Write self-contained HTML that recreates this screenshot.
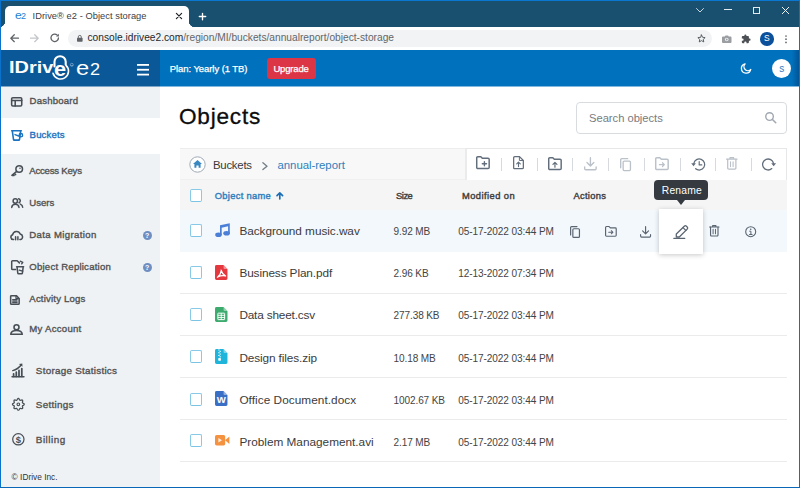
<!DOCTYPE html>
<html lang="en">
<head>
<meta charset="utf-8">
<title>IDrive e2 - Object storage</title>
<style>
*{box-sizing:border-box;margin:0;padding:0}
html,body{width:800px;height:488px;overflow:hidden;background:#fff}
body{font-family:"Liberation Sans",Arial,sans-serif;color:#333;position:relative}
div,span,svg{position:absolute}
svg{overflow:visible}
#frame{left:0;top:0;width:800px;height:488px;border:1px solid #0a72ca;border-top-color:#0a78d2;border-bottom-color:#0a67b8;z-index:50}
#titlebar{left:0;top:0;width:800px;height:27px;background:#19506f}
#tab{left:5px;top:6px;width:184px;height:22px;background:#fff;border-radius:5px 5px 0 0}
#tab .c1{left:-6px;bottom:1px;width:6px;height:6px;background:radial-gradient(circle at 0 0,transparent 6px,#fff 6.5px)}
#tab .c2{right:-6px;bottom:1px;width:6px;height:6px;background:radial-gradient(circle at 100% 0,transparent 6px,#fff 6.5px)}
#tabt{left:33px;top:10px;font-size:9.4px;color:#3c4043;white-space:nowrap}
#fav{left:15px;top:9px;font-size:10px;color:#1b7fd4;letter-spacing:-.5px;white-space:nowrap}
#toolbar{left:0;top:27px;width:800px;height:23px;background:#fff}
#omni{left:68px;top:30px;width:644px;height:17px;border-radius:9px;background:#f1f3f4}
#url{left:87.5px;top:32.5px;font-size:10.2px;color:#5f6368;white-space:nowrap}
#url i{font-style:normal;color:#202124}
#prof{left:760px;top:32px;width:13.5px;height:13.5px;border-radius:50%;background:#0c4f9b;color:#fff;font-size:8.5px;text-align:center;line-height:13.5px}
#hdrL{left:0;top:50px;width:160px;height:37px;background:linear-gradient(#0a5897 0,#0a5897 36px,#7ca5c6 36px)}
#hdrR{left:160px;top:50px;width:640px;height:37px;background:linear-gradient(#0071bc 0,#0071bc 36px,#80b8de 36px)}
#logo1{left:9.5px;top:58px;font-size:19px;font-weight:bold;color:#fff;letter-spacing:-.9px;white-space:nowrap}
#logo2{left:76px;top:57px;font-size:20.5px;color:#fff;letter-spacing:-.5px;white-space:nowrap}
#reg{left:68.5px;top:60px;font-size:5px;color:#cfe2f2}
#plan{left:170.5px;top:63px;font-size:9.25px;color:#fff;white-space:nowrap}
#upg{left:267px;top:58px;width:48.5px;height:21px;border-radius:3px;background:#dc3545;color:#fff;font-size:9.2px;text-align:center;line-height:20.5px}
#ava{left:772.2px;top:59px;width:19px;height:19px;border-radius:50%;background:#fff;color:#2f7cc2;font-size:10px;text-align:center;line-height:20px}
#side{left:0;top:87px;width:160px;height:402px;background:#eef2f5}
#sel{left:0;top:118px;width:160px;height:36px;background:#fff}
.nav{left:29.6px;font-size:9.3px;font-weight:bold;color:#565656;white-space:nowrap;line-height:12px}
.nav.b{color:#1a73c0}
.nav.w{left:35.8px}
.q{left:142.7px;width:9px;height:9px;border-radius:50%;background:#6e8ec2;color:#fff;font-size:7px;font-weight:bold;text-align:center;line-height:9.5px}
#copy{left:11px;top:472px;font-size:8.2px;color:#333;white-space:nowrap}
#h1{left:178.5px;top:102px;font-size:23.6px;color:#111;white-space:nowrap;line-height:28px}
#search{left:576px;top:101.5px;width:211px;height:32px;border:1px solid #d8dcdf;border-radius:4px;background:#fff}
#search span{left:12.5px;top:8.5px;font-size:11.25px;color:#6f757b;white-space:nowrap}
#tbar{left:180px;top:148px;width:607px;height:32px;background:#f8f8f8;border-top:1px solid #ededed;border-bottom:1px solid #f0f0f0}
#tools{left:465px;top:148px;width:322px;height:32px;background:#fff;border:1px solid #e6e7e9;border-left:2px solid #ebebeb;border-bottom:none}
.sep{top:158px;width:1px;height:12.5px;background:#d6dadf}
.bc{top:157.5px;font-size:11.2px;white-space:nowrap;color:#3f3f3f}
#thead{left:180px;top:180px;width:607px;height:30px;background:#f5f5f5}
.th{top:189px;font-size:9.3px;font-weight:bold;color:#444;white-space:nowrap;line-height:12px}
.row{left:180px;width:607px;border-bottom:1px solid #e9ebed}
.cb{left:190px;width:12px;height:13px;border:1px solid #88c9e7;border-bottom-color:#7cc3e4;border-radius:2px;background:#fff}
.fn{left:240px;font-size:11.63px;color:#3d3d3d;white-space:nowrap;line-height:14px}
.sz{left:393px;font-size:10.14px;color:#444;white-space:nowrap;line-height:12px}
.dt{left:458px;font-size:10.14px;color:#444;white-space:nowrap;line-height:12px}
#tip{left:654px;top:180px;width:53.5px;height:20px;border-radius:4px;background:#343a40;color:#fff;font-size:10px;text-align:center;line-height:19px}
#tipa{left:676.8px;top:199.8px;width:0;height:0;border-left:4.5px solid transparent;border-right:4.5px solid transparent;border-top:5px solid #343a40}
#hov{left:659px;top:209px;width:44px;height:45px;background:#fff;box-shadow:0 1px 5px rgba(0,0,0,.22)}
</style>
</head>
<body>
<div id="titlebar"></div><div id="tab"><div class="c1"></div><div class="c2"></div></div>
<span style="left:15.00px;top:10.00px;font-size:11.2px;line-height:1;color:#1b7fd4;font-weight:normal;letter-spacing:0.000px;white-space:pre;transform:scaleX(1.08);transform-origin:0 0;">e</span>
<span style="left:21.40px;top:12.00px;font-size:8.3px;line-height:1;color:#1b7fd4;font-weight:normal;letter-spacing:0.000px;white-space:pre;transform:scaleX(1.08);transform-origin:0 0;">2</span>
<span style="left:32.50px;top:12.00px;font-size:9.3px;line-height:1;color:#3c4043;font-weight:normal;letter-spacing:0.047px;white-space:pre;">IDrive® e2 - Object storage</span>
<svg style="left:175.9px;top:13.4px" width="6" height="6" viewBox="0 0 6 6" ><path d="M.4.4l5.200 5.200M5.600.4L.4 5.600" fill="none" stroke="#202124" stroke-width="1.2" stroke-linecap="round" stroke-linejoin="round"/></svg>
<svg style="left:198.9px;top:12.8px" width="7" height="7" viewBox="0 0 7 7" ><path d="M3.500 .3v6.400M.3 3.500h6.400" fill="none" stroke="#ffffff" stroke-width="1.35" stroke-linecap="round" stroke-linejoin="round"/></svg>
<svg style="left:696px;top:8px" width="8" height="5" viewBox="0 0 8 5" ><path d="M.5.5L4 4 7.5.5" fill="none" stroke="#c9d6de" stroke-width="1" stroke-linecap="round" stroke-linejoin="round"/></svg>
<svg style="left:724px;top:9.3px" width="8" height="1" viewBox="0 0 8 1" ><rect width="8" height="1" fill="#e3eaee"/></svg>
<svg style="left:753px;top:6.5px" width="7" height="7" viewBox="0 0 7 7" ><rect x=".5" y=".5" width="6" height="6" fill="none" stroke="#e3eaee" stroke-width="1"/></svg>
<svg style="left:782px;top:6.5px" width="7" height="7" viewBox="0 0 7 7" ><path d="M.3.3l6.4 6.4M6.7.3L.3 6.7" fill="none" stroke="#f2f5f7" stroke-width="1" stroke-linecap="round" stroke-linejoin="round"/></svg>
<div id="toolbar"></div><div id="omni"></div>
<svg style="left:10px;top:34px" width="9" height="8.4" viewBox="0 0 9 8.4" ><path d="M8.5 4.2H1M4.3.7L.8 4.2l3.5 3.5" fill="none" stroke="#5f6368" stroke-width="1.25" stroke-linecap="round" stroke-linejoin="round"/></svg>
<svg style="left:30px;top:34px" width="9" height="8.4" viewBox="0 0 9 8.4" ><path d="M.5 4.2H8M4.7.7l3.5 3.5-3.5 3.5" fill="none" stroke="#c4c7ca" stroke-width="1.25" stroke-linecap="round" stroke-linejoin="round"/></svg>
<svg style="left:49.8px;top:33.4px" width="9.6" height="9.6" viewBox="0 0 9 9" ><path d="M7.9 4.6A3.5 3.5 0 1 1 6.8 2" fill="none" stroke="#5f6368" stroke-width="1.25" stroke-linecap="round" stroke-linejoin="round"/><path d="M8.3.6v2.7H5.6z" fill="#5f6368"/></svg>
<svg style="left:76.5px;top:35px" width="5.6" height="6.8" viewBox="0 0 5.6 6.8" ><rect x="0" y="2.8" width="5.6" height="4" rx=".7" fill="#5f6368"/><path d="M1.3 3V1.9a1.5 1.5 0 0 1 3 0V3" fill="none" stroke="#5f6368" stroke-width=".9"/></svg>
<span style="left:87.50px;top:33.00px;font-size:10.2px;line-height:1;color:#62666b;font-weight:normal;letter-spacing:0.002px;white-space:pre;"><i style="font-style:normal;color:#25282b">console.idrivee2.com</i>/region/MI/buckets/annualreport/object-storage</span>
<svg style="left:696.5px;top:34px" width="9" height="9" viewBox="0 0 24 24" ><path d="M12 2.5l2.9 6.3 6.8.8-5 4.7 1.3 6.8L12 17.7l-6 3.4 1.3-6.8-5-4.7 6.8-.8z" fill="none" stroke="#4d5156" stroke-width="2.4" stroke-linecap="round" stroke-linejoin="round"/></svg>
<svg style="left:721.5px;top:34.5px" width="9.5" height="8" viewBox="0 0 19 16" ><path d="M2 3h3.5L7 1h5l1.5 2H17a2 2 0 0 1 2 2v9a2 2 0 0 1-2 2H2a2 2 0 0 1-2-2V5a2 2 0 0 1 2-2z" fill="#9a9da1"/><circle cx="9.5" cy="9" r="3.6" fill="#f4f4f4"/><circle cx="9.5" cy="9" r="1.8" fill="#9a9da1"/></svg>
<svg style="left:741px;top:34px" width="10" height="10" viewBox="0 0 24 24" ><path d="M20.5 11H19V7a2 2 0 0 0-2-2h-4V3.5a2.5 2.5 0 0 0-5 0V5H4a2 2 0 0 0-2 2v3.8h1.5a2.7 2.7 0 0 1 0 5.4H2V20a2 2 0 0 0 2 2h3.8v-1.5a2.7 2.7 0 0 1 5.4 0V22H17a2 2 0 0 0 2-2v-4h1.5a2.5 2.5 0 0 0 0-5z" fill="#4d5156"/></svg>
<div id="prof">S</div>
<svg style="left:785.3px;top:34.6px" width="2" height="8.4" viewBox="0 0 2 8.4" ><circle cx="1" cy="1" r=".85" fill="#5f6368"/><circle cx="1" cy="4.2" r=".85" fill="#5f6368"/><circle cx="1" cy="7.4" r=".85" fill="#5f6368"/></svg>
<div id="hdrL"></div><div id="hdrR"></div>
<span style="left:9.20px;top:60.00px;font-size:15.8px;line-height:1;color:#fff;font-weight:bold;letter-spacing:0.000px;white-space:pre;transform:scaleX(1.26);transform-origin:0 0;">IDriv</span>
<svg style="left:50px;top:54px" width="20" height="26" viewBox="0 0 20 26" ><path d="M4.500 12.5V7.800a5.600 5.600 0 0 1 11.200 0V10.400" fill="none" stroke="#fff" stroke-width="2.1" stroke-linecap="round" stroke-linejoin="round"/><path d="M16 11.300A7.900 7.900 0 1 1 3 19.200" fill="none" stroke="#fff" stroke-width="1.6" stroke-linecap="round" stroke-linejoin="round"/></svg>
<span style="left:53.60px;top:59.00px;font-size:20.5px;line-height:1;color:#fff;font-weight:bold;letter-spacing:0.000px;white-space:pre;transform:scaleX(1.06);transform-origin:0 0;">e</span>
<svg style="left:69.6px;top:62.9px" width="3.6" height="3.6" viewBox="0 0 3.6 3.6" ><circle cx="1.8" cy="1.8" r="1.5" fill="none" stroke="#b9d2e8" stroke-width=".5"/><text x="1.8" y="2.7" font-size="2.4" text-anchor="middle" fill="#b9d2e8" font-family="Liberation Sans,sans-serif">R</text></svg>
<span style="left:76.30px;top:57.00px;font-size:21px;line-height:1;color:#fff;font-weight:normal;letter-spacing:0.000px;white-space:pre;transform:scaleX(1.13);transform-origin:0 0;">e</span>
<span style="left:89.60px;top:62.00px;font-size:15.6px;line-height:1;color:#fff;font-weight:normal;letter-spacing:0.000px;white-space:pre;transform:scaleX(1.16);transform-origin:0 0;">2</span>
<svg style="left:137px;top:64px" width="12" height="11.5" viewBox="0 0 12 11.5" ><rect y="0" width="12" height="1.8" fill="#fff"/><rect y="4.85" width="12" height="1.8" fill="#fff"/><rect y="9.7" width="12" height="1.8" fill="#fff"/></svg>
<span style="left:169.80px;top:64.00px;font-size:9.5px;line-height:1;color:#fff;font-weight:normal;letter-spacing:-0.075px;white-space:pre;-webkit-text-stroke:.25px #fff;">Plan: Yearly (1 TB)</span>
<div id="upg"></div>
<span style="left:273.40px;top:64.00px;font-size:9.5px;line-height:1;color:#fff;font-weight:normal;letter-spacing:-0.176px;white-space:pre;-webkit-text-stroke:.25px #fff;">Upgrade</span>
<svg style="left:739.8px;top:62.2px" width="12.6" height="12.6" viewBox="0 0 24 24" ><path d="M20.5 14.2A9 9 0 1 1 9.8 3.5a7 7 0 0 0 10.7 10.7z" fill="none" stroke="#fff" stroke-width="2.5" stroke-linecap="round" stroke-linejoin="round"/></svg>
<div style="left:792px;top:50px;width:7px;height:36px;background:linear-gradient(90deg,rgba(0,60,120,0),rgba(0,60,120,.55))"></div>
<div id="ava">s</div>
<div id="side"></div><div id="sel"></div>
<span style="left:29.60px;top:96.00px;font-size:9.6px;line-height:1;color:#535353;font-weight:normal;letter-spacing:0.183px;white-space:pre;-webkit-text-stroke:.36px #535353;">Dashboard</span>
<span style="left:29.60px;top:130.00px;font-size:9.6px;line-height:1;color:#1a73c0;font-weight:normal;letter-spacing:0.143px;white-space:pre;-webkit-text-stroke:.36px #1a73c0;">Buckets</span>
<span style="left:29.30px;top:166.00px;font-size:9.6px;line-height:1;color:#535353;font-weight:normal;letter-spacing:-0.222px;white-space:pre;-webkit-text-stroke:.36px #535353;">Access Keys</span>
<span style="left:29.30px;top:198.00px;font-size:9.6px;line-height:1;color:#535353;font-weight:normal;letter-spacing:-0.016px;white-space:pre;-webkit-text-stroke:.36px #535353;">Users</span>
<span style="left:29.30px;top:230.00px;font-size:9.6px;line-height:1;color:#535353;font-weight:normal;letter-spacing:0.355px;white-space:pre;-webkit-text-stroke:.36px #535353;">Data Migration</span>
<span style="left:29.30px;top:262.00px;font-size:9.6px;line-height:1;color:#535353;font-weight:normal;letter-spacing:0.214px;white-space:pre;-webkit-text-stroke:.36px #535353;">Object Replication</span>
<span style="left:29.30px;top:294.00px;font-size:9.6px;line-height:1;color:#535353;font-weight:normal;letter-spacing:0.187px;white-space:pre;-webkit-text-stroke:.36px #535353;">Activity Logs</span>
<span style="left:29.30px;top:324.00px;font-size:9.6px;line-height:1;color:#535353;font-weight:normal;letter-spacing:0.267px;white-space:pre;-webkit-text-stroke:.36px #535353;">My Account</span>
<span style="left:35.80px;top:366.00px;font-size:9.9px;line-height:1;color:#535353;font-weight:normal;letter-spacing:0.256px;white-space:pre;-webkit-text-stroke:.36px #535353;">Storage Statistics</span>
<span style="left:35.80px;top:400.00px;font-size:9.9px;line-height:1;color:#535353;font-weight:normal;letter-spacing:0.288px;white-space:pre;-webkit-text-stroke:.36px #535353;">Settings</span>
<span style="left:35.80px;top:435.00px;font-size:9.9px;line-height:1;color:#535353;font-weight:normal;letter-spacing:0.523px;white-space:pre;-webkit-text-stroke:.36px #535353;">Billing</span>
<div class="q" style="top:231.4px">?</div><div class="q" style="top:263.4px">?</div>
<span style="left:11.60px;top:473.00px;font-size:8.3px;line-height:1;color:#333;font-weight:normal;letter-spacing:0.020px;white-space:pre;">© IDrive Inc.</span>
<svg style="left:10.8px;top:96.6px" width="11.4" height="9.6" viewBox="0 0 11.4 9.6" ><rect x=".65" y=".65" width="10.1" height="8.3" rx="1.2" fill="none" stroke="#474e55" stroke-width="1.55" stroke-linecap="round" stroke-linejoin="round"/><path d="M.65 3.5h10.1M4.2 3.5v5.4" fill="none" stroke="#474e55" stroke-width="1.55" stroke-linecap="round" stroke-linejoin="round"/></svg>
<svg style="left:10.8px;top:130.4px" width="12.4" height="10.8" viewBox="0 0 12.4 10.8" ><path d="M.7.75h9.6M1.3.9l1.2 8.6a.8.8 0 0 0 .8.65h4.4a.8.8 0 0 0 .8-.65L9.7.9" fill="none" stroke="#1a73c0" stroke-width="1.6" stroke-linecap="round" stroke-linejoin="round"/><circle cx="9.9" cy="5.2" r="1.7" fill="none" stroke="#1a73c0" stroke-width="1.45" stroke-linecap="round" stroke-linejoin="round"/><path d="M4 4.6l4.4 1.6" fill="none" stroke="#1a73c0" stroke-width="1.45" stroke-linecap="round" stroke-linejoin="round"/></svg>
<svg style="left:10.8px;top:165.2px" width="12.2" height="11.2" viewBox="0 0 12.2 11.2" ><circle cx="8.2" cy="4" r="3.3" fill="none" stroke="#474e55" stroke-width="1.55" stroke-linecap="round" stroke-linejoin="round"/><circle cx="9" cy="3.3" r=".75" fill="#474e55"/><path d="M5.7 6.3L.9 10.3M1.2 10.4h1.9M3.4 8.3l1.2 1.3" fill="none" stroke="#474e55" stroke-width="1.55" stroke-linecap="round" stroke-linejoin="round"/></svg>
<svg style="left:10.5px;top:197.8px" width="12.4" height="10" viewBox="0 0 12.4 10" ><circle cx="4.3" cy="3" r="2.2" fill="none" stroke="#474e55" stroke-width="1.5" stroke-linecap="round" stroke-linejoin="round"/><path d="M.7 9.4a3.7 3.7 0 0 1 7.3 0" fill="none" stroke="#474e55" stroke-width="1.5" stroke-linecap="round" stroke-linejoin="round"/><path d="M7.6.8a2.1 2.1 0 0 1 .4 4M9.3 6.1a3.6 3.6 0 0 1 2.4 3.2" fill="none" stroke="#474e55" stroke-width="1.5" stroke-linecap="round" stroke-linejoin="round"/></svg>
<svg style="left:10.3px;top:231px" width="13.4" height="9.4" viewBox="0 0 13.4 9.4" ><path d="M3.6 8.6H3.2A2.5 2.5 0 0 1 2.7 3.7 3.9 3.9 0 0 1 10.2 3a2.9 2.9 0 0 1 .4 5.6H9.9" fill="none" stroke="#474e55" stroke-width="1.5" stroke-linecap="round" stroke-linejoin="round"/><path d="M5.6 5.8v3M7.9 5.8v3" fill="none" stroke="#474e55" stroke-width="1.5" stroke-linecap="round" stroke-linejoin="round"/></svg>
<svg style="left:10.5px;top:260.3px" width="13.6" height="14.5" viewBox="0 0 13.6 14.5" ><path d="M4.6 9.6H1.6a.9.9 0 0 1-.9-.9V1.6a.9.9 0 0 1 .9-.9h4.6l2.2 2.2" fill="none" stroke="#474e55" stroke-width="1.5" stroke-linecap="round" stroke-linejoin="round"/><path d="M9.2 1.2l2.6 1.1-1.1 1.6" fill="none" stroke="#474e55" stroke-width="1.35" stroke-linecap="round" stroke-linejoin="round"/><path d="M5.6 6.7h7M6 6.9l.8 6.2a.8.8 0 0 0 .8.7h3a.8.8 0 0 0 .8-.7l.8-6.2" fill="none" stroke="#474e55" stroke-width="1.5" stroke-linecap="round" stroke-linejoin="round"/><path d="M8.2 10.2l3.4 1" fill="none" stroke="#474e55" stroke-width="1.35" stroke-linecap="round" stroke-linejoin="round"/></svg>
<svg style="left:10.2px;top:294.8px" width="9.8" height="10" viewBox="0 0 9.8 10" ><path d="M1.7.65h4.6l2.85 2.8v5a.9.9 0 0 1-.9.9H1.55a.9.9 0 0 1-.9-.9V1.55a.9.9 0 0 1 .9-.9z" fill="none" stroke="#474e55" stroke-width="1.55" stroke-linecap="round" stroke-linejoin="round"/><path d="M2.6 4.6h4.6M2.6 6.1h4.6M2.6 7.6h4.6" fill="none" stroke="#474e55" stroke-width="1.15" stroke-linecap="round" stroke-linejoin="round"/><path d="M6 .9v2.6h2.7" fill="none" stroke="#474e55" stroke-width="1.25" stroke-linecap="round" stroke-linejoin="round"/></svg>
<svg style="left:10px;top:324px" width="13" height="11" viewBox="0 0 13 11" ><circle cx="6.5" cy="3.2" r="2.5" fill="none" stroke="#474e55" stroke-width="1.55" stroke-linecap="round" stroke-linejoin="round"/><path d="M.7 10.3c.3-2.3 2.3-3.8 5.8-3.8s5.5 1.5 5.8 3.8z" fill="none" stroke="#474e55" stroke-width="1.55" stroke-linecap="round" stroke-linejoin="round"/></svg>
<svg style="left:12.2px;top:363.2px" width="12" height="14.4" viewBox="0 0 12 14.4" ><path d="M0 13.8h12" fill="none" stroke="#474e55" stroke-width="1.35" stroke-linecap="round" stroke-linejoin="round"/><path d="M1.6 13.4v-2.6M4.3 13.4V9.2M7 13.4V7.4M9.8 13.4V5.6" fill="none" stroke="#474e55" stroke-width="1.75" stroke-linecap="round" stroke-linejoin="round"/><path d="M.8 7.6c3.500-.8 6.200-2.700 8.600-5.800" fill="none" stroke="#474e55" stroke-width="1.45" stroke-linecap="round" stroke-linejoin="round"/><path d="M6.900.9l3.400-.4.200 3.300z" fill="#474e55"/></svg>
<svg style="left:12.25px;top:398.2px" width="12.7" height="12.7" viewBox="-6.35 -6.35 12.7 12.7" ><path d="M5.90 0.00L5.70 0.50L5.20 0.92L4.61 1.24L4.18 1.52L4.03 1.88L4.14 2.39L4.33 3.03L4.39 3.68L4.17 4.17L3.68 4.39L3.03 4.33L2.39 4.14L1.88 4.03L1.52 4.18L1.24 4.61L0.92 5.20L0.50 5.70L0.00 5.90L-0.50 5.70L-0.92 5.20L-1.24 4.61L-1.52 4.18L-1.88 4.03L-2.39 4.14L-3.03 4.33L-3.68 4.39L-4.17 4.17L-4.39 3.68L-4.33 3.03L-4.14 2.39L-4.03 1.88L-4.18 1.52L-4.61 1.24L-5.20 0.92L-5.70 0.50L-5.90 0.00L-5.70 -0.50L-5.20 -0.92L-4.61 -1.24L-4.18 -1.52L-4.03 -1.88L-4.14 -2.39L-4.33 -3.03L-4.39 -3.68L-4.17 -4.17L-3.68 -4.39L-3.03 -4.33L-2.39 -4.14L-1.88 -4.03L-1.52 -4.18L-1.24 -4.61L-0.92 -5.20L-0.50 -5.70L-0.00 -5.90L0.50 -5.70L0.92 -5.20L1.24 -4.61L1.52 -4.18L1.88 -4.03L2.39 -4.14L3.03 -4.33L3.68 -4.39L4.17 -4.17L4.39 -3.68L4.33 -3.03L4.14 -2.39L4.03 -1.88L4.18 -1.52L4.61 -1.24L5.20 -0.92L5.70 -0.50z" fill="none" stroke="#474e55" stroke-width="1.25" stroke-linejoin="round"/><circle r="1.35" fill="none" stroke="#474e55" stroke-width="1.1"/></svg>
<svg style="left:12.35px;top:432.8px" width="12.7" height="12.7" viewBox="0 0 12.7 12.7" ><circle cx="6.35" cy="6.35" r="5.65" fill="none" stroke="#474e55" stroke-width="1.25"/><text x="6.35" y="9.6" font-size="9.4" font-weight="bold" text-anchor="middle" fill="#474e55" font-family="Liberation Sans,sans-serif">$</text></svg>
<span style="left:179.00px;top:106.00px;font-size:22.6px;line-height:1;color:#0c0c0c;font-weight:normal;letter-spacing:0.782px;white-space:pre;-webkit-text-stroke:.3px #0c0c0c;">Objects</span>
<div id="search"></div>
<span style="left:589.00px;top:113.00px;font-size:11.2px;line-height:1;color:#767c82;font-weight:normal;letter-spacing:-0.017px;white-space:pre;">Search objects</span>
<svg style="left:764.6px;top:112.2px" width="11.4" height="11.4" viewBox="0 0 10.5 10.5" ><circle cx="4.2" cy="4.2" r="3.5" fill="none" stroke="#a1a8b2" stroke-width="1.3" stroke-linecap="round" stroke-linejoin="round"/><path d="M6.9 6.9l3 3" fill="none" stroke="#a1a8b2" stroke-width="1.4" stroke-linecap="round" stroke-linejoin="round"/></svg>
<div id="tbar"></div><div id="tools"></div>
<svg style="left:189px;top:155.9px" width="17" height="17" viewBox="0 0 17 17" ><circle cx="8.5" cy="8.5" r="7.700" fill="#fff" stroke="#9fabb5" stroke-width="1"/><path d="M8.500 3.900l4.500 4.100h-1.400v3.800H9.600V9.400H7.400v2.400H5.400V8H4z" fill="#3a88c2"/></svg>
<span style="left:213.00px;top:160.00px;font-size:11.4px;line-height:1;color:#3a3a3a;font-weight:normal;letter-spacing:-0.255px;white-space:pre;">Buckets</span>
<svg style="left:262.3px;top:161.5px" width="6" height="8.4" viewBox="0 0 6 8.400" ><path d="M.9.8L5 4.200 .9 7.600" fill="none" stroke="#737e88" stroke-width="1.35" stroke-linecap="round" stroke-linejoin="round"/></svg>
<span style="left:277.50px;top:160.00px;font-size:11.4px;line-height:1;color:#2f7fbd;font-weight:normal;letter-spacing:-0.030px;white-space:pre;">annual-report</span>
<div class="sep" style="left:501px"></div>
<div class="sep" style="left:537px"></div>
<div class="sep" style="left:572.3px"></div>
<div class="sep" style="left:608px"></div>
<div class="sep" style="left:643.5px"></div>
<div class="sep" style="left:680px"></div>
<div class="sep" style="left:715.3px"></div>
<div class="sep" style="left:751px"></div>
<svg style="left:476.2px;top:156.1px" width="13.9" height="13.2" viewBox="0 0 13.2 12.6" ><path d="M1.700 .65h2.900l1.400 1.500h5.500a1.050 1.050 0 0 1 1.050 1.050v7.700a1.050 1.050 0 0 1-1.050 1.050H1.700A1.050 1.050 0 0 1 .65 10.900V1.700A1.050 1.050 0 0 1 1.700 .65z" fill="none" stroke="#626e7b" stroke-width="1.4" stroke-linecap="round" stroke-linejoin="round"/><path d="M8 5.400v4M6 7.400h4" fill="none" stroke="#626e7b" stroke-width="1.35" stroke-linecap="round" stroke-linejoin="round"/></svg>
<svg style="left:512.6px;top:155.6px" width="11" height="13.4" viewBox="0 0 11 13.4" ><path d="M1.700 .65h4.800l3.850 3.800v7.250a1.050 1.050 0 0 1-1.050 1.050H1.700A1.050 1.050 0 0 1 .65 11.700V1.700A1.050 1.050 0 0 1 1.700 .65z" fill="none" stroke="#626e7b" stroke-width="1.25" stroke-linecap="round" stroke-linejoin="round"/><path d="M6.400 .9v3.600h3.700" fill="none" stroke="#626e7b" stroke-width="1" stroke-linecap="round" stroke-linejoin="round"/><path d="M5.500 10.600V6.200M3.700 7.900l1.800-1.800 1.800 1.800" fill="none" stroke="#626e7b" stroke-width="1.15" stroke-linecap="round" stroke-linejoin="round"/></svg>
<svg style="left:548.2px;top:157.1px" width="13.9" height="13.2" viewBox="0 0 13.2 12.6" ><path d="M1.700 .65h2.900l1.400 1.500h5.500a1.050 1.050 0 0 1 1.050 1.050v7.700a1.050 1.050 0 0 1-1.050 1.050H1.700A1.050 1.050 0 0 1 .65 10.900V1.700A1.050 1.050 0 0 1 1.700 .65z" fill="none" stroke="#626e7b" stroke-width="1.4" stroke-linecap="round" stroke-linejoin="round"/><path d="M6.600 9.700V5.300M4.700 7.100l1.900-1.900 1.900 1.900" fill="none" stroke="#626e7b" stroke-width="1.15" stroke-linecap="round" stroke-linejoin="round"/></svg>
<svg style="left:584.4px;top:157px" width="12.84" height="13.482000000000001" viewBox="0 0 12 12.6" ><path d="M6 .6v7.600M2.800 5.200L6 8.400l3.200-3.200" fill="none" stroke="#bac1c9" stroke-width="1.25" stroke-linecap="round" stroke-linejoin="round"/><path d="M.65 9.300v1.600a1.050 1.050 0 0 0 1.050 1.050h8.600a1.050 1.050 0 0 0 1.050-1.050V9.300" fill="none" stroke="#bac1c9" stroke-width="1.25" stroke-linecap="round" stroke-linejoin="round"/></svg>
<svg style="left:620.3px;top:157.8px" width="11.13" height="13.23" viewBox="0 0 10.6 12.6" ><rect x="3" y="2.900" width="6.950" height="9.050" rx="1" fill="none" stroke="#bac1c9" stroke-width="1.25" stroke-linecap="round" stroke-linejoin="round"/><path d="M.65 9.400V1.650a1 1 0 0 1 1-1h5.700" fill="none" stroke="#bac1c9" stroke-width="1.25" stroke-linecap="round" stroke-linejoin="round"/></svg>
<svg style="left:654.5px;top:157.20000000000002px" width="13.9" height="13.2" viewBox="0 0 13.2 12.6" ><path d="M1.700 .65h2.900l1.400 1.500h5.500a1.050 1.050 0 0 1 1.050 1.050v7.700a1.050 1.050 0 0 1-1.050 1.050H1.700A1.050 1.050 0 0 1 .65 10.900V1.700A1.050 1.050 0 0 1 1.700 .65z" fill="none" stroke="#bac1c9" stroke-width="1.4" stroke-linecap="round" stroke-linejoin="round"/><path d="M4.200 7.300h4.600M7.100 5.500l1.800 1.800-1.800 1.800" fill="none" stroke="#bac1c9" stroke-width="1.15" stroke-linecap="round" stroke-linejoin="round"/></svg>
<svg style="left:690.8px;top:157.2px" width="14" height="13" viewBox="0 0 14 13" ><path d="M2.820 6.360A5.500 5.500 0 1 1 4.660 11.700" fill="none" stroke="#626e7b" stroke-width="1.25" stroke-linecap="round" stroke-linejoin="round"/><path d="M.2 6.200h4.700L2.550 9.200z" fill="#626e7b"/><path d="M8.200 4.500V7.900H10.800" fill="none" stroke="#626e7b" stroke-width="1.15" stroke-linecap="round" stroke-linejoin="round"/></svg>
<svg style="left:726.2px;top:157.2px" width="11.6" height="12.8" viewBox="0 0 11.6 12.8" ><path d="M.6 2.200h10.400M4 2V.65h3.600V2" fill="none" stroke="#bac1c9" stroke-width="1.2" stroke-linecap="round" stroke-linejoin="round"/><path d="M1.700 2.400v8.700a1.050 1.050 0 0 0 1.050 1.050h6.100A1.050 1.050 0 0 0 9.900 11.100V2.400" fill="none" stroke="#bac1c9" stroke-width="1.25" stroke-linecap="round" stroke-linejoin="round"/><path d="M4.500 4.800v4.800M7.100 4.800v4.800" fill="none" stroke="#bac1c9" stroke-width="1.1" stroke-linecap="round" stroke-linejoin="round"/></svg>
<svg style="left:762px;top:157.2px" width="14" height="13" viewBox="0 0 14 13" ><path d="M9.800 11.600A5.500 5.500 0 1 1 11.500 6.400" fill="none" stroke="#626e7b" stroke-width="1.3" stroke-linecap="round" stroke-linejoin="round"/><path d="M9.200 6.200h4.900L11.650 9.300z" fill="#626e7b"/></svg>
<div id="thead"></div>
<div class="cb" style="top:189px"></div>
<span style="left:214.80px;top:192.00px;font-size:9.35px;line-height:1;color:#2f7fbd;font-weight:normal;letter-spacing:0.292px;white-space:pre;-webkit-text-stroke:.4px #2f7fbd;">Object name</span>
<svg style="left:276.3px;top:191.7px" width="7.6" height="7.6" viewBox="0 0 7.600 7.600" ><path d="M3.800 7V1.200M1 3.700L3.800 .95 6.600 3.700" fill="none" stroke="#1b6db5" stroke-width="1.65" stroke-linecap="round" stroke-linejoin="round"/></svg>
<span style="left:396.10px;top:192.00px;font-size:9.35px;line-height:1;color:#3d3d3d;font-weight:normal;letter-spacing:-0.496px;white-space:pre;-webkit-text-stroke:.4px #3d3d3d;">Size</span>
<span style="left:462.00px;top:192.00px;font-size:9.35px;line-height:1;color:#3d3d3d;font-weight:normal;letter-spacing:0.439px;white-space:pre;-webkit-text-stroke:.4px #3d3d3d;">Modified on</span>
<span style="left:573.40px;top:192.00px;font-size:9.35px;line-height:1;color:#3d3d3d;font-weight:normal;letter-spacing:0.324px;white-space:pre;-webkit-text-stroke:.4px #3d3d3d;">Actions</span>
<div class="row" style="top:210px;height:41.5px;background:#f2f8fc;border-bottom:none;"></div>
<div class="row" style="top:251px;height:42.9px;"></div>
<div class="row" style="top:293px;height:43px;"></div>
<div class="row" style="top:335px;height:42.9px;"></div>
<div class="row" style="top:377px;height:42.9px;"></div>
<div class="row" style="top:419px;height:42.9px;"></div>
<div class="cb" style="top:224px"></div>
<span style="left:239.40px;top:226.00px;font-size:11.8px;line-height:1;color:#3b3b3b;font-weight:normal;letter-spacing:-0.048px;white-space:pre;">Background music.wav</span>
<span style="left:393.60px;top:227.00px;font-size:10.05px;line-height:1;color:#444;font-weight:normal;letter-spacing:0.000px;white-space:pre;letter-spacing:-.12px;">9.92 MB</span>
<span style="left:458.20px;top:227.00px;font-size:10.05px;line-height:1;color:#444;font-weight:normal;letter-spacing:-0.077px;white-space:pre;">05-17-2022 03:44 PM</span>
<div class="cb" style="top:266px"></div>
<span style="left:239.40px;top:268.00px;font-size:11.8px;line-height:1;color:#3b3b3b;font-weight:normal;letter-spacing:-0.102px;white-space:pre;">Business Plan.pdf</span>
<span style="left:393.60px;top:269.00px;font-size:10.05px;line-height:1;color:#444;font-weight:normal;letter-spacing:0.000px;white-space:pre;letter-spacing:-.12px;">2.96 KB</span>
<span style="left:458.20px;top:269.00px;font-size:10.05px;line-height:1;color:#444;font-weight:normal;letter-spacing:-0.077px;white-space:pre;">12-13-2022 07:34 PM</span>
<div class="cb" style="top:308px"></div>
<span style="left:239.40px;top:310.00px;font-size:11.8px;line-height:1;color:#3b3b3b;font-weight:normal;letter-spacing:-0.179px;white-space:pre;">Data sheet.csv</span>
<span style="left:393.60px;top:311.00px;font-size:10.05px;line-height:1;color:#444;font-weight:normal;letter-spacing:0.000px;white-space:pre;letter-spacing:-.12px;">277.38 KB</span>
<span style="left:458.20px;top:311.00px;font-size:10.05px;line-height:1;color:#444;font-weight:normal;letter-spacing:-0.077px;white-space:pre;">05-17-2022 03:44 PM</span>
<div class="cb" style="top:350px"></div>
<span style="left:239.40px;top:353.00px;font-size:11.8px;line-height:1;color:#3b3b3b;font-weight:normal;letter-spacing:-0.116px;white-space:pre;">Design files.zip</span>
<span style="left:393.60px;top:354.00px;font-size:10.05px;line-height:1;color:#444;font-weight:normal;letter-spacing:0.000px;white-space:pre;letter-spacing:-.12px;">10.18 MB</span>
<span style="left:458.20px;top:354.00px;font-size:10.05px;line-height:1;color:#444;font-weight:normal;letter-spacing:-0.077px;white-space:pre;">05-17-2022 03:44 PM</span>
<div class="cb" style="top:393px"></div>
<span style="left:239.40px;top:395.00px;font-size:11.8px;line-height:1;color:#3b3b3b;font-weight:normal;letter-spacing:0.045px;white-space:pre;">Office Document.docx</span>
<span style="left:393.60px;top:396.00px;font-size:10.05px;line-height:1;color:#444;font-weight:normal;letter-spacing:0.000px;white-space:pre;letter-spacing:-.12px;">1002.67 KB</span>
<span style="left:458.20px;top:396.00px;font-size:10.05px;line-height:1;color:#444;font-weight:normal;letter-spacing:-0.077px;white-space:pre;">05-17-2022 03:44 PM</span>
<div class="cb" style="top:434px"></div>
<span style="left:239.40px;top:437.00px;font-size:11.8px;line-height:1;color:#3b3b3b;font-weight:normal;letter-spacing:-0.006px;white-space:pre;">Problem Management.avi</span>
<span style="left:393.60px;top:438.00px;font-size:10.05px;line-height:1;color:#444;font-weight:normal;letter-spacing:0.000px;white-space:pre;letter-spacing:-.12px;">2.17 MB</span>
<span style="left:458.20px;top:438.00px;font-size:10.05px;line-height:1;color:#444;font-weight:normal;letter-spacing:-0.077px;white-space:pre;">05-17-2022 03:44 PM</span>
<svg style="left:214.9px;top:222.9px" width="15.2" height="14" viewBox="0 0 15.200 14" ><path d="M5 2.300L14.800 .2V10.300H13.100V3.300L6.700 4.700V12H5z" fill="#4c7fd6"/><ellipse cx="3.500" cy="11.700" rx="3.300" ry="2.300" fill="#4c7fd6"/><ellipse cx="11.600" cy="10.200" rx="3.300" ry="2.300" fill="#4c7fd6"/></svg>
<svg style="left:214.9px;top:264.6px" width="12.5" height="14.9" viewBox="0 0 12.7 15.2" ><path d="M1.500 0h7.200l4 4v9.700a1.500 1.500 0 0 1-1.500 1.500H1.500A1.500 1.500 0 0 1 0 13.700V1.500A1.500 1.500 0 0 1 1.500 0z" fill="#e5383e"/><path d="M8.700 0l4 4H9.700a1 1 0 0 1-1-1z" fill="#fff" fill-opacity=".45"/><path d="M6.200 5.200c.9 3 2.300 5 4.600 6.100M6.400 5.400c-.4 3-1.800 5.700-3.900 7.200M2.700 12.300c2.700-1.400 5.400-1.800 8-1.100" fill="none" stroke="#fff" stroke-width="1.25" stroke-linecap="round" stroke-linejoin="round"/></svg>
<svg style="left:214.9px;top:306.8px" width="12.5" height="14.9" viewBox="0 0 12.7 15.2" ><path d="M1.500 0h7.200l4 4v9.700a1.500 1.500 0 0 1-1.500 1.500H1.500A1.500 1.500 0 0 1 0 13.700V1.500A1.500 1.500 0 0 1 1.500 0z" fill="#3dab6e"/><path d="M8.700 0l4 4H9.700a1 1 0 0 1-1-1z" fill="#fff" fill-opacity=".45"/><rect x="2.900" y="6.300" width="6.900" height="6.600" rx=".4" fill="none" stroke="#fff" stroke-width="1"/><path d="M2.900 8.500h6.900M2.900 10.700h6.900M6.350 6.300v6.600" stroke="#fff" stroke-width=".9"/></svg>
<svg style="left:214.9px;top:348.9px" width="12.5" height="14.9" viewBox="0 0 12.7 15.2" ><path d="M1.500 0h7.200l4 4v9.700a1.500 1.500 0 0 1-1.500 1.500H1.500A1.500 1.500 0 0 1 0 13.700V1.500A1.500 1.500 0 0 1 1.500 0z" fill="#1fb5da"/><path d="M8.700 0l4 4H9.700a1 1 0 0 1-1-1z" fill="#fff" fill-opacity=".45"/><path d="M3.300 1h1.400M4.600 2.400h1.400M3.300 3.800h1.400M4.600 5.200h1.400M3.300 6.600h1.400M4.600 8h1.400" stroke="#fff" stroke-width="1"/><rect x="3.300" y="9.300" width="2.700" height="2.700" rx=".5" fill="#fff"/></svg>
<svg style="left:214.9px;top:391px" width="12.5" height="14.9" viewBox="0 0 12.7 15.2" ><path d="M1.500 0h7.200l4 4v9.700a1.500 1.500 0 0 1-1.500 1.500H1.500A1.500 1.500 0 0 1 0 13.700V1.500A1.500 1.500 0 0 1 1.500 0z" fill="#3a6fc6"/><path d="M8.700 0l4 4H9.700a1 1 0 0 1-1-1z" fill="#fff" fill-opacity=".45"/><text x="6.300" y="12.700" font-size="9.800" font-weight="bold" text-anchor="middle" fill="#fff" font-family="Liberation Sans,sans-serif">W</text></svg>
<svg style="left:215px;top:435px" width="14.4" height="10.4" viewBox="0 0 14.4 10.4" ><rect width="10.2" height="10.4" rx="1.6" fill="#f5923f"/><path d="M10 5.200l4.400-3.700v7.400z" fill="#f5923f"/><path d="M3.400 3v4.400l3.600-2.200z" fill="#fff" fill-opacity=".85"/></svg>
<svg style="left:570px;top:226px" width="10.069999999999999" height="11.969999999999999" viewBox="0 0 10.6 12.6" ><rect x="3" y="2.900" width="6.950" height="9.050" rx="1" fill="none" stroke="#5a6571" stroke-width="1.25" stroke-linecap="round" stroke-linejoin="round"/><path d="M.65 9.400V1.650a1 1 0 0 1 1-1h5.700" fill="none" stroke="#5a6571" stroke-width="1.25" stroke-linecap="round" stroke-linejoin="round"/></svg>
<svg style="left:604.6px;top:226px" width="11.8" height="10.8" viewBox="0 0 13.2 12.6" preserveAspectRatio="none"><path d="M1.700 .65h2.900l1.400 1.500h5.500a1.050 1.050 0 0 1 1.050 1.050v7.700a1.050 1.050 0 0 1-1.050 1.050H1.700A1.050 1.050 0 0 1 .65 10.900V1.700A1.050 1.050 0 0 1 1.700 .65z" fill="none" stroke="#5a6571" stroke-width="1.3" stroke-linecap="round" stroke-linejoin="round"/><path d="M4.200 7.300h4.600M7.100 5.500l1.800 1.800-1.800 1.800" fill="none" stroke="#5a6571" stroke-width="1.2" stroke-linecap="round" stroke-linejoin="round"/></svg>
<svg style="left:639.7px;top:226px" width="11.16" height="11.718" viewBox="0 0 12 12.6" ><path d="M6 .6v7.600M2.800 5.200L6 8.400l3.200-3.200" fill="none" stroke="#5a6571" stroke-width="1.25" stroke-linecap="round" stroke-linejoin="round"/><path d="M.65 9.300v1.600a1.050 1.050 0 0 0 1.050 1.050h8.600a1.050 1.050 0 0 0 1.050-1.050V9.300" fill="none" stroke="#5a6571" stroke-width="1.25" stroke-linecap="round" stroke-linejoin="round"/></svg>
<div id="hov"></div>
<svg style="left:673.3px;top:225.3px" width="15.6" height="14" viewBox="0 0 15.600 14" ><path d="M11.300 1.200a1.500 1.500 0 0 1 2.100 0l.8.8a1.500 1.500 0 0 1 0 2.100L6.300 12H3.300V9z" fill="none" stroke="#5a6571" stroke-width="1.3" stroke-linecap="round" stroke-linejoin="round"/><path d="M10 2.600l2.900 2.900" fill="none" stroke="#5a6571" stroke-width="1.1" stroke-linecap="round" stroke-linejoin="round"/><path d="M.8 13.300h11" fill="none" stroke="#5a6571" stroke-width="1.3" stroke-linecap="round" stroke-linejoin="round"/></svg>
<svg style="left:709px;top:225.4px" width="10.556" height="11.648000000000001" viewBox="0 0 11.6 12.8" ><path d="M.6 2.200h10.400M4 2V.65h3.600V2" fill="none" stroke="#5a6571" stroke-width="1.2" stroke-linecap="round" stroke-linejoin="round"/><path d="M1.700 2.400v8.700a1.050 1.050 0 0 0 1.050 1.050h6.100A1.050 1.050 0 0 0 9.900 11.100V2.400" fill="none" stroke="#5a6571" stroke-width="1.25" stroke-linecap="round" stroke-linejoin="round"/><path d="M4.500 4.800v4.800M7.100 4.800v4.800" fill="none" stroke="#5a6571" stroke-width="1.1" stroke-linecap="round" stroke-linejoin="round"/></svg>
<svg style="left:744.7px;top:226.3px" width="11.4" height="11.4" viewBox="0 0 11.400 11.400" ><circle cx="5.700" cy="5.700" r="5" fill="none" stroke="#5a6571" stroke-width="1.100"/><circle cx="5.700" cy="3.300" r=".8" fill="#5a6571"/><path d="M4.700 5.200h1.200v3.200M4.500 8.500h2.600" fill="none" stroke="#5a6571" stroke-width="1" stroke-linecap="round" stroke-linejoin="round"/></svg>
<div id="tip"></div><div id="tipa"></div>
<span style="left:661.80px;top:186.00px;font-size:10.3px;line-height:1;color:#fff;font-weight:normal;letter-spacing:0.196px;white-space:pre;">Rename</span>
<div id="frame"></div>
</body>
</html>
